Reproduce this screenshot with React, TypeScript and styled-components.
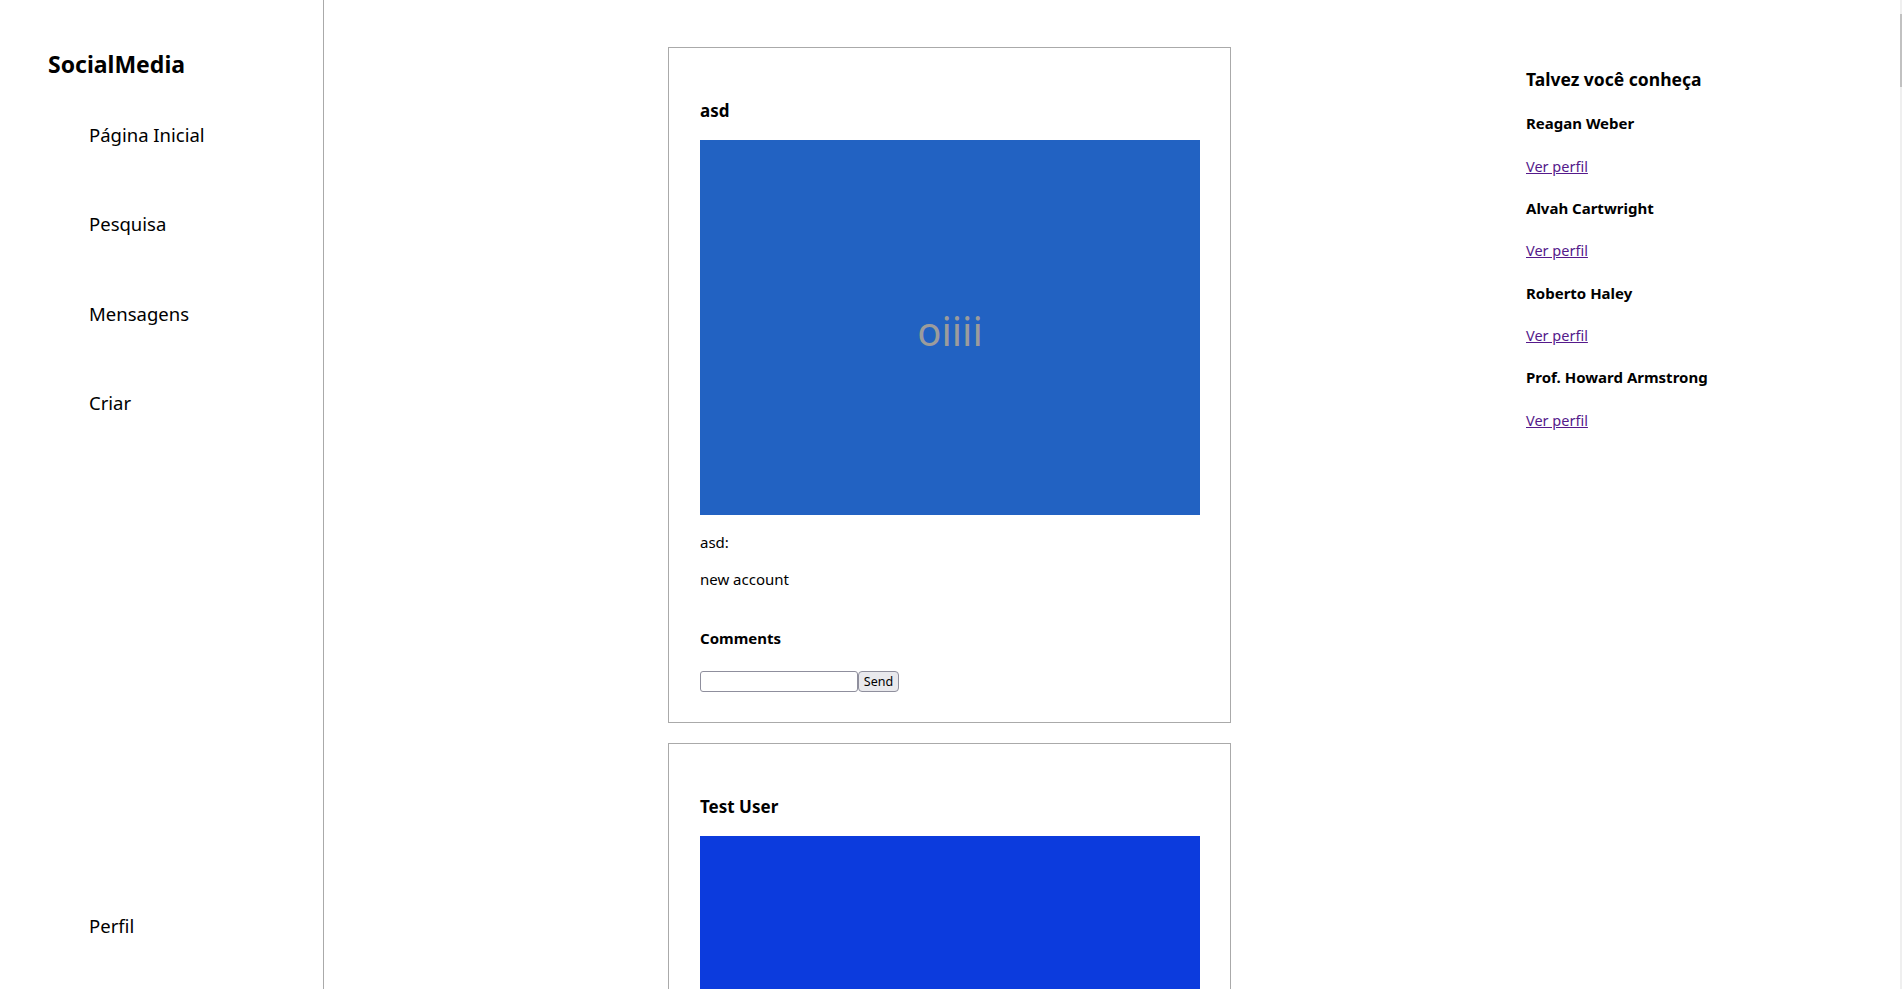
import React from "react";
import styled, { createGlobalStyle } from "styled-components";

const GlobalStyle = createGlobalStyle`
  html, body {
    margin: 0;
    padding: 0;
    height: 100%;
    overflow: hidden;
    background: #ffffff;
  }
  body {
    font-family: "Noto Sans", "Open Sans", sans-serif;
    color: #000000;
  }
  #root {
    height: 100%;
  }
`;

const Layout = styled.div`
  position: relative;
  display: grid;
  grid-template-columns: 324px 1fr 376px;
  height: 100vh;
  overflow: hidden;
`;

const Sidebar = styled.nav`
  box-sizing: border-box;
  height: 100%;
  border-right: 1px solid #aaaaaa;
  display: flex;
  flex-direction: column;
  padding: 49px 0 51px 48px;
`;

const Logo = styled.h1`
  margin: 0;
  font-size: 23px;
  line-height: 30px;
  font-weight: 700;
`;

const NavList = styled.ul`
  list-style: none;
  margin: 44px 0 0;
  padding: 0 0 0 41px;
  display: flex;
  flex-direction: column;
  gap: 65.3px;
`;

const NavItem = styled.li`
  font-size: 18.5px;
  line-height: 24px;
  cursor: pointer;
`;

const BottomNav = styled(NavList)`
  margin-top: auto;
`;

const Main = styled.main`
  overflow: hidden;
  padding: 47px 0 0 344px;
  display: flex;
  flex-direction: column;
  gap: 20px;
`;

const Card = styled.article`
  flex-shrink: 0;
  box-sizing: border-box;
  width: 563px;
  border: 1px solid #aaaaaa;
  padding: 30px 30px 30px 31px;
`;

const PostAuthor = styled.h3`
  margin: 22px 0 18px;
  font-size: 17px;
  line-height: 22px;
  font-weight: 700;
`;

const PostImage = styled.svg`
  display: block;
  width: 500px;
  height: 375px;
`;

const Text = styled.p`
  margin: 17px 0 0;
  font-size: 15px;
  line-height: 20px;
`;

const CommentsTitle = styled.h4`
  margin: 39px 0 0;
  font-size: 15px;
  line-height: 20px;
  font-weight: 700;
`;

const CommentForm = styled.form`
  margin-top: 23px;
  display: flex;
  height: 21px;
`;

const CommentInput = styled.input`
  box-sizing: border-box;
  width: 158px;
  height: 21px;
  padding: 1px 3px;
  border: 1px solid #8f8f9d;
  border-radius: 3px;
  font: 13px "Noto Sans", sans-serif;
  background: #ffffff;
`;

const SendButton = styled.button`
  box-sizing: border-box;
  width: 41px;
  height: 21px;
  padding: 0;
  border: 1px solid #8f8f9d;
  border-radius: 4px;
  background: #e9e9ed;
  color: #000000;
  font: 12.5px "Noto Sans", sans-serif;
  line-height: 19px;
`;

const Aside = styled.aside`
  padding-top: 67px;
  display: flex;
  flex-direction: column;
  gap: 22.35px;
`;

const AsideTitle = styled.h3`
  margin: 0;
  font-size: 17.5px;
  line-height: 24px;
  font-weight: 700;
`;

const PersonName = styled.h4`
  margin: 0;
  font-size: 15px;
  line-height: 20px;
  font-weight: 700;
`;

const ProfileLink = styled.a`
  display: block;
  font-size: 14.5px;
  line-height: 20px;
  color: #551a8b;
  text-decoration: underline;
  width: max-content;
`;

const ScrollTrack = styled.div`
  position: absolute;
  top: 0;
  right: 0;
  bottom: 0;
  width: 2px;
  background: #efefef;
`;

const ScrollThumb = styled.div`
  position: absolute;
  top: 14px;
  right: 0;
  width: 2px;
  height: 73px;
  background: #c1c1c1;
`;

type Post = {
  author: string;
  color: string;
  label?: string;
  caption?: string;
  body?: string;
  showComments?: boolean;
};

const posts: Post[] = [
  {
    author: "asd",
    color: "#2262c2",
    label: "oiiii",
    caption: "asd:",
    body: "new account",
    showComments: true,
  },
  { author: "Test User", color: "#0c3bdd" },
];

const people = [
  "Reagan Weber",
  "Alvah Cartwright",
  "Roberto Haley",
  "Prof. Howard Armstrong",
];

function PostCard({ post }: { post: Post }) {
  return (
    <Card>
      <PostAuthor>{post.author}</PostAuthor>
      <PostImage viewBox="0 0 500 375">
        <rect width="500" height="375" fill={post.color} />
        {post.label && (
          <text
            x="250"
            y="206"
            textAnchor="middle"
            fill="#9c9c9c"
            fontSize="40"
            fontFamily="Noto Sans, sans-serif"
          >
            {post.label}
          </text>
        )}
      </PostImage>
      {post.caption && <Text>{post.caption}</Text>}
      {post.body && <Text>{post.body}</Text>}
      {post.showComments && (
        <>
          <CommentsTitle>Comments</CommentsTitle>
          <CommentForm onSubmit={(e) => e.preventDefault()}>
            <CommentInput type="text" />
            <SendButton type="submit">Send</SendButton>
          </CommentForm>
        </>
      )}
    </Card>
  );
}

export default function App() {
  return (
    <>
      <GlobalStyle />
      <Layout>
        <Sidebar>
          <Logo>SocialMedia</Logo>
          <NavList>
            <NavItem>Página Inicial</NavItem>
            <NavItem>Pesquisa</NavItem>
            <NavItem>Mensagens</NavItem>
            <NavItem>Criar</NavItem>
          </NavList>
          <BottomNav>
            <NavItem>Perfil</NavItem>
          </BottomNav>
        </Sidebar>
        <Main>
          {posts.map((p) => (
            <PostCard key={p.author} post={p} />
          ))}
        </Main>
        <Aside>
          <AsideTitle>Talvez você conheça</AsideTitle>
          {people.map((name) => (
            <React.Fragment key={name}>
              <PersonName>{name}</PersonName>
              <ProfileLink href="#">Ver perfil</ProfileLink>
            </React.Fragment>
          ))}
        </Aside>
        <ScrollTrack />
        <ScrollThumb />
      </Layout>
    </>
  );
}
